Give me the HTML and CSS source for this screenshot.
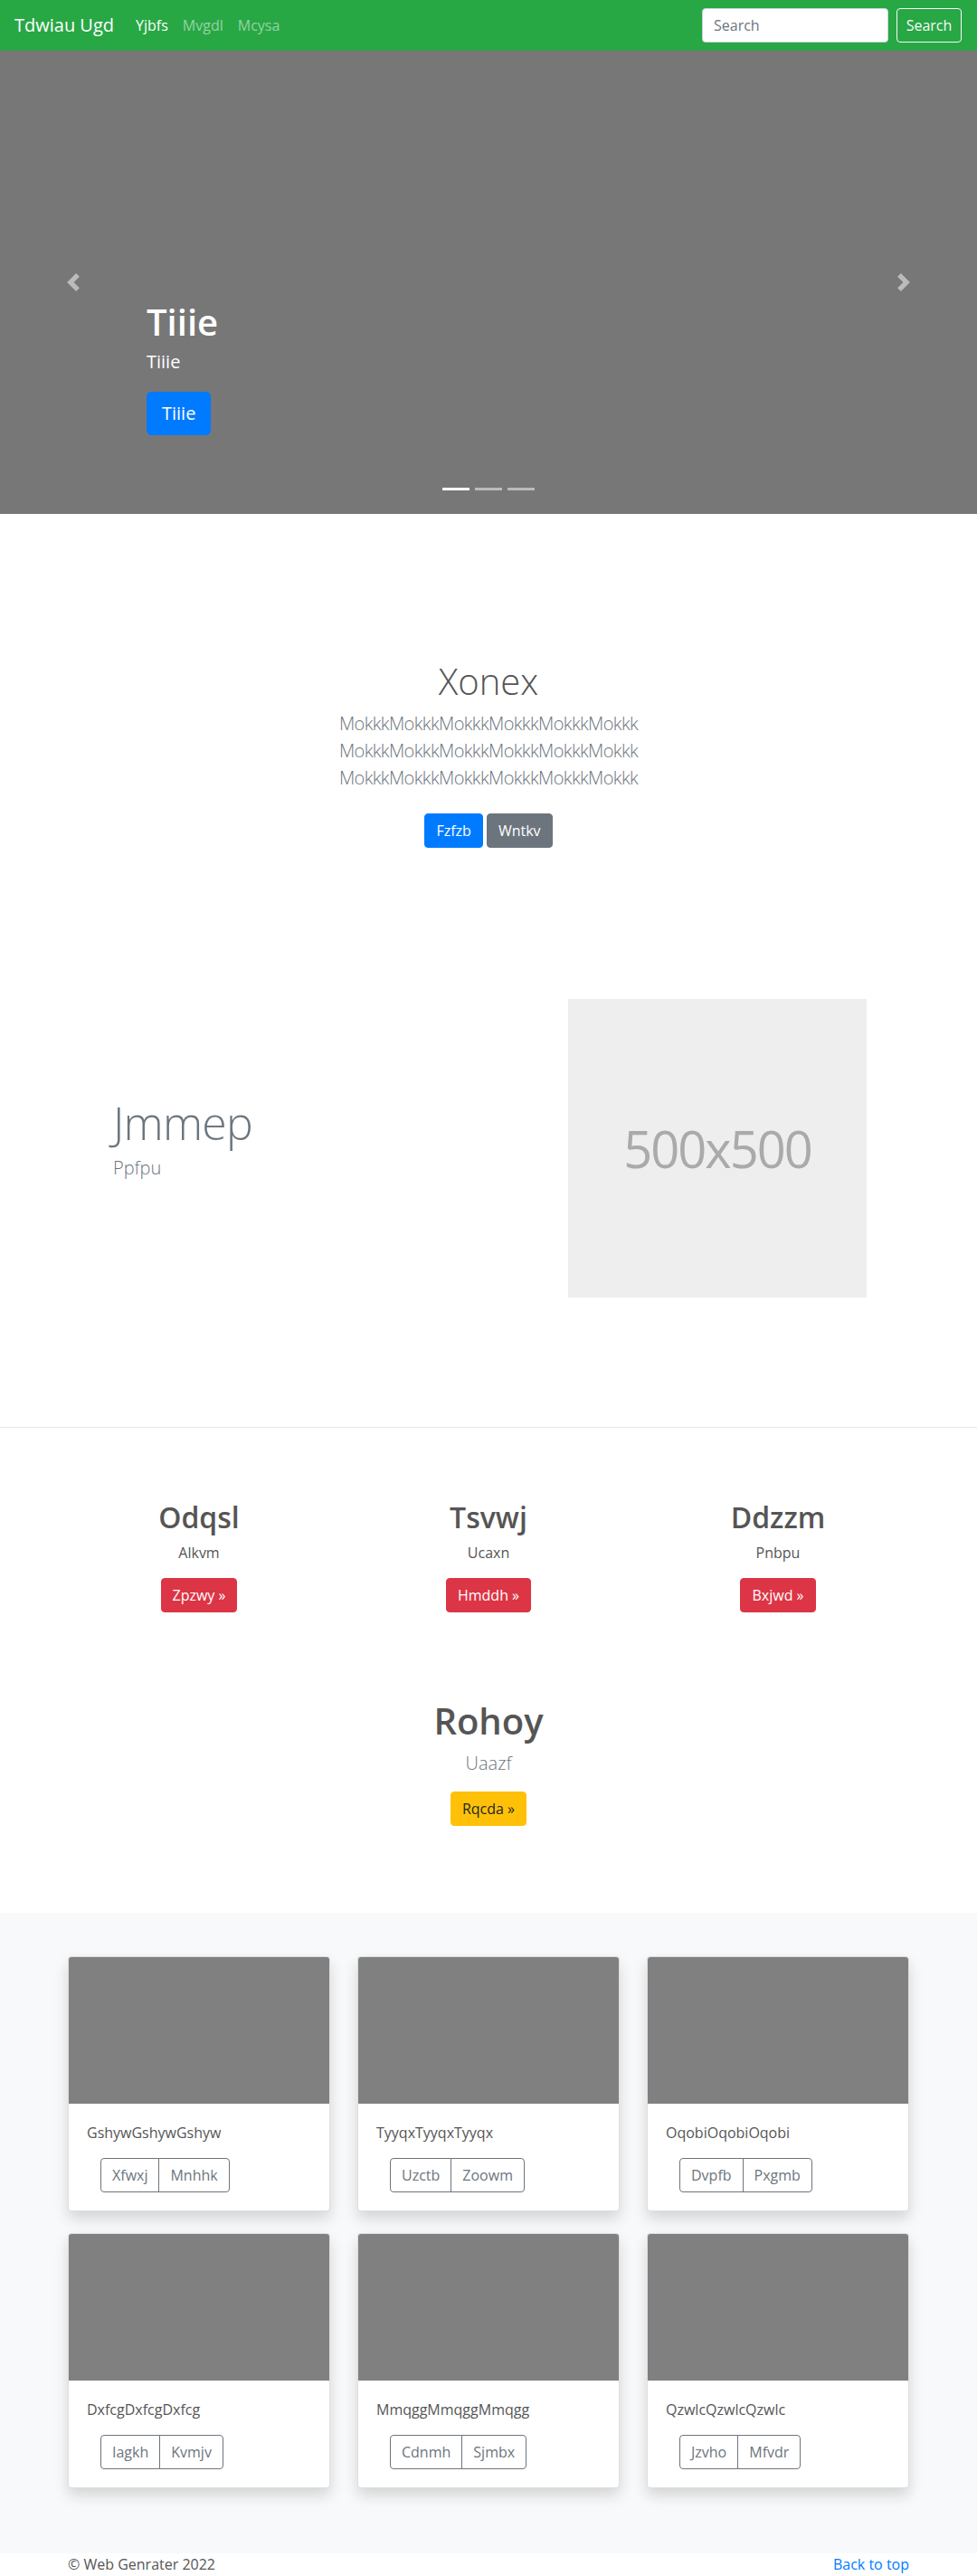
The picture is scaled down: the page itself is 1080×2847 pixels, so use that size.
FILE: index.html
```html
<!DOCTYPE html>
<html lang="en">
<head>
<meta charset="utf-8">
<title>Tdwiau Ugd</title>
<link rel="stylesheet" href="styles.css">
</head>
<body>
<nav class="navbar">
  <a class="brand" href="#">Tdwiau Ugd</a>
  <ul class="nav">
    <li><a class="active" href="#">Yjbfs</a></li>
    <li><a href="#">Mvgdl</a></li>
    <li><a href="#">Mcysa</a></li>
  </ul>
  <form class="search">
    <input type="text" placeholder="Search">
    <button type="button">Search</button>
  </form>
</nav>

<div class="carousel">
  <div class="slide">
    <h1>Tiiie</h1>
    <p class="cap-lead">Tiiie</p>
    <p class="cap-actions"><a class="btn btn-lg btn-primary" href="#">Tiiie</a></p>
  </div>
  <ol class="indicators">
    <li class="active"></li>
    <li></li>
    <li></li>
  </ol>
  <a class="control prev" href="#"><svg width="20" height="20" viewBox="0 0 8 8"><path fill="#fff" d="M5.25 0l-4 4 4 4 1.5-1.5L4.25 4l2.5-2.5L5.25 0z"/></svg></a>
  <a class="control next" href="#"><svg width="20" height="20" viewBox="0 0 8 8"><path fill="#fff" d="M2.75 0l-1.5 1.5L3.75 4l-2.5 2.5L2.75 8l4-4-4-4z"/></svg></a>
</div>

<section class="intro">
  <h1>Xonex</h1>
  <p class="lead intro-lead">MokkkMokkkMokkkMokkkMokkkMokkk<br>MokkkMokkkMokkkMokkkMokkkMokkk<br>MokkkMokkkMokkkMokkkMokkkMokkk</p>
  <p class="actions">
    <a class="btn btn-primary" href="#">Fzfzb</a>
    <a class="btn btn-secondary" href="#">Wntkv</a>
  </p>
</section>

<section class="featurette container">
  <div class="feat-text">
    <h2>Jmmep</h2>
    <p class="lead">Ppfpu</p>
  </div>
  <div class="placeholder">500x500</div>
</section>

<hr class="divider">

<section class="features">
  <div class="container">
    <div class="feature-row">
      <div class="feature">
        <h2>Odqsl</h2>
        <p>Alkvm</p>
        <p class="btn-line"><a class="btn btn-danger" href="#">Zpzwy »</a></p>
      </div>
      <div class="feature">
        <h2>Tsvwj</h2>
        <p>Ucaxn</p>
        <p class="btn-line"><a class="btn btn-danger" href="#">Hmddh »</a></p>
      </div>
      <div class="feature">
        <h2>Ddzzm</h2>
        <p>Pnbpu</p>
        <p class="btn-line"><a class="btn btn-danger" href="#">Bxjwd »</a></p>
      </div>
    </div>
    <div class="feature-main">
      <h2>Rohoy</h2>
      <p class="lead">Uaazf</p>
      <p class="btn-line"><a class="btn btn-warning" href="#">Rqcda »</a></p>
    </div>
  </div>
</section>

<section class="album">
  <div class="container card-grid">
    <div class="card">
      <div class="card-img"></div>
      <div class="card-body">
        <p class="card-text">GshywGshywGshyw</p>
        <div class="btn-group"><a class="gbtn" href="#">Xfwxj</a><a class="gbtn" href="#">Mnhhk</a></div>
      </div>
    </div>
    <div class="card">
      <div class="card-img"></div>
      <div class="card-body">
        <p class="card-text">TyyqxTyyqxTyyqx</p>
        <div class="btn-group"><a class="gbtn" href="#">Uzctb</a><a class="gbtn" href="#">Zoowm</a></div>
      </div>
    </div>
    <div class="card">
      <div class="card-img"></div>
      <div class="card-body">
        <p class="card-text">OqobiOqobiOqobi</p>
        <div class="btn-group"><a class="gbtn" href="#">Dvpfb</a><a class="gbtn" href="#">Pxgmb</a></div>
      </div>
    </div>
    <div class="card">
      <div class="card-img"></div>
      <div class="card-body">
        <p class="card-text">DxfcgDxfcgDxfcg</p>
        <div class="btn-group"><a class="gbtn" href="#">Iagkh</a><a class="gbtn" href="#">Kvmjv</a></div>
      </div>
    </div>
    <div class="card">
      <div class="card-img"></div>
      <div class="card-body">
        <p class="card-text">MmqggMmqggMmqgg</p>
        <div class="btn-group"><a class="gbtn" href="#">Cdnmh</a><a class="gbtn" href="#">Sjmbx</a></div>
      </div>
    </div>
    <div class="card">
      <div class="card-img"></div>
      <div class="card-body">
        <p class="card-text">QzwlcQzwlcQzwlc</p>
        <div class="btn-group"><a class="gbtn" href="#">Jzvho</a><a class="gbtn" href="#">Mfvdr</a></div>
      </div>
    </div>
  </div>
</section>

<footer class="footer container">
  <p>© Web Genrater 2022</p>
  <p><a href="#">Back to top</a></p>
</footer>
</body>
</html>
```

FILE: styles.css
```css
* { box-sizing: border-box; }

body {
  margin: 0;
  font-family: "Segoe UI", "Open Sans", "Noto Sans", Arial, sans-serif;
  font-size: 16px;
  line-height: 1.5;
  color: #555;
  background: #fff;
}

.container {
  width: 960px;
  margin: 0 auto;
  padding: 0 15px;
}

/* navbar */
.navbar {
  display: flex;
  align-items: center;
  height: 56px;
  padding: 0 17px 0 16px;
  background: #28a745;
}
.brand {
  font-size: 20px;
  line-height: 30px;
  color: #fff;
  text-decoration: none;
  margin-right: 16px;
}
.nav {
  display: flex;
  flex: 1;
  list-style: none;
  margin: 0;
  padding: 0;
}
.nav a {
  display: block;
  padding: 8px;
  color: rgba(255, 255, 255, 0.5);
  text-decoration: none;
}
.nav a.active { color: #fff; }
.search {
  display: flex;
  gap: 9px;
  margin: 0;
}
.search input {
  width: 206px;
  height: 38px;
  border: 1px solid #ced4da;
  border-radius: 4px;
  padding: 6px 12px;
  font: inherit;
  color: #495057;
  background: #fff;
}
.search input::placeholder { color: #6c757d; }
.search button {
  height: 38px;
  width: 72px;
  padding: 6px 0;
  border: 1px solid #f8f9fa;
  border-radius: 4px;
  background: transparent;
  color: #f8f9fa;
  font: inherit;
}

/* carousel */
.carousel {
  position: relative;
  height: 512px;
  background: #777;
  overflow: hidden;
}
.slide {
  height: 100%;
  display: flex;
  flex-direction: column;
  justify-content: flex-end;
  padding: 0 15% 71px;
  color: #fff;
}
.slide h1 {
  font-size: 40px;
  font-weight: 600;
  line-height: 1.2;
  margin: 0 0 5px;
}
.cap-lead {
  font-size: 20px;
  line-height: 30px;
  margin: 0 0 18px;
}
.cap-actions {
  display: flex;
  margin: 0 0 16px;
}
.indicators {
  position: absolute;
  left: 0;
  right: 0;
  bottom: 16px;
  display: flex;
  justify-content: center;
  list-style: none;
  margin: 0;
  padding: 0;
}
.indicators li {
  width: 30px;
  height: 3px;
  margin: 10px 3px;
  background: #fff;
  opacity: 0.5;
}
.indicators li.active { opacity: 1; }
.control {
  position: absolute;
  top: 0;
  bottom: 0;
  width: 15%;
  display: flex;
  align-items: center;
  justify-content: center;
  opacity: 0.5;
}
.control.prev { left: 0; }
.control.next { right: 0; }

/* buttons */
.btn {
  display: inline-block;
  padding: 6px 12px;
  font-size: 16px;
  line-height: 24px;
  border: 1px solid transparent;
  border-radius: 4px;
  text-decoration: none;
  color: #fff;
}
.btn-lg {
  padding: 8px 16px;
  font-size: 20px;
  line-height: 30px;
  border-radius: 5px;
}
.btn-primary { background: #007bff; border-color: #007bff; }
.btn-secondary { background: #6c757d; border-color: #6c757d; }
.btn-danger { background: #dc3545; border-color: #dc3545; }
.btn-warning { background: #ffc107; border-color: #ffc107; color: #212529; }

/* intro */
.intro {
  padding-top: 161px;
  text-align: center;
}
.intro h1 {
  font-size: 40px;
  font-weight: 300;
  line-height: 1.2;
  margin: 0 0 8px;
  color: #555;
}
.lead {
  font-size: 20px;
  font-weight: 300;
  line-height: 30px;
  color: #6c757d;
  margin: 0 0 16px;
}
.intro-lead { letter-spacing: -0.6px; }
.actions {
  display: flex;
  justify-content: center;
  gap: 4px;
  margin: 0;
  padding: 8px 0 24px;
}

/* featurette */
.featurette {
  display: flex;
  align-items: center;
  padding-top: 143px;
  padding-bottom: 143px;
}
.feat-text {
  flex: 1;
  padding-left: 50px;
}
.feat-text h2 {
  font-size: 50px;
  font-weight: 300;
  line-height: 1;
  letter-spacing: -0.8px;
  margin: 0 0 10px;
  color: #6c757d;
}
.placeholder {
  width: 330px;
  height: 330px;
  margin-right: 47px;
  background: #eee;
  color: #aaa;
  font-size: 56px;
  display: flex;
  align-items: center;
  justify-content: center;
  letter-spacing: -2px;
}

.divider {
  margin: 0;
  border: 0;
  border-top: 1px solid #e5e5e5;
}

/* features */
.features {
  padding: 80px 0;
  text-align: center;
}
.feature-row {
  display: grid;
  grid-template-columns: repeat(3, 1fr);
  column-gap: 30px;
  margin-bottom: 80px;
}
.feature h2 {
  font-size: 32px;
  font-weight: 600;
  line-height: 1.2;
  margin: 0 0 8px;
  color: #555;
}
.feature p { margin: 0 0 16px; }
.btn-line {
  display: flex;
  justify-content: center;
  margin: 0 0 16px;
}
.feature-main h2 {
  font-size: 40px;
  font-weight: 600;
  line-height: 1.2;
  margin: 0 0 8px;
  color: #555;
}

/* album */
.album {
  background: #f8f9fa;
  padding: 48px 0;
}
.card-grid {
  display: grid;
  grid-template-columns: repeat(3, 1fr);
  column-gap: 30px;
}
.card {
  background: #fff;
  border: 1px solid rgba(0, 0, 0, 0.125);
  border-radius: 4px;
  overflow: hidden;
  box-shadow: 0 8px 16px rgba(0, 0, 0, 0.15);
  margin-bottom: 24px;
}
.card-img {
  height: 162px;
  background: #808080;
}
.card-body { padding: 20px; }
.card-text {
  margin: 0 0 16px;
  color: #555;
}
.btn-group {
  display: inline-flex;
  margin-left: 15px;
}
.gbtn {
  display: block;
  padding: 6px 12px;
  font-size: 16px;
  line-height: 24px;
  color: #6c757d;
  border: 1px solid #6c757d;
  text-decoration: none;
}
.gbtn:first-child { border-radius: 4px 0 0 4px; }
.gbtn:last-child { border-radius: 0 4px 4px 0; margin-left: -1px; }

/* footer */
.footer {
  display: flex;
  justify-content: space-between;
}
.footer p { margin: 0; color: #555; }
.footer a { color: #007bff; text-decoration: none; }
```
